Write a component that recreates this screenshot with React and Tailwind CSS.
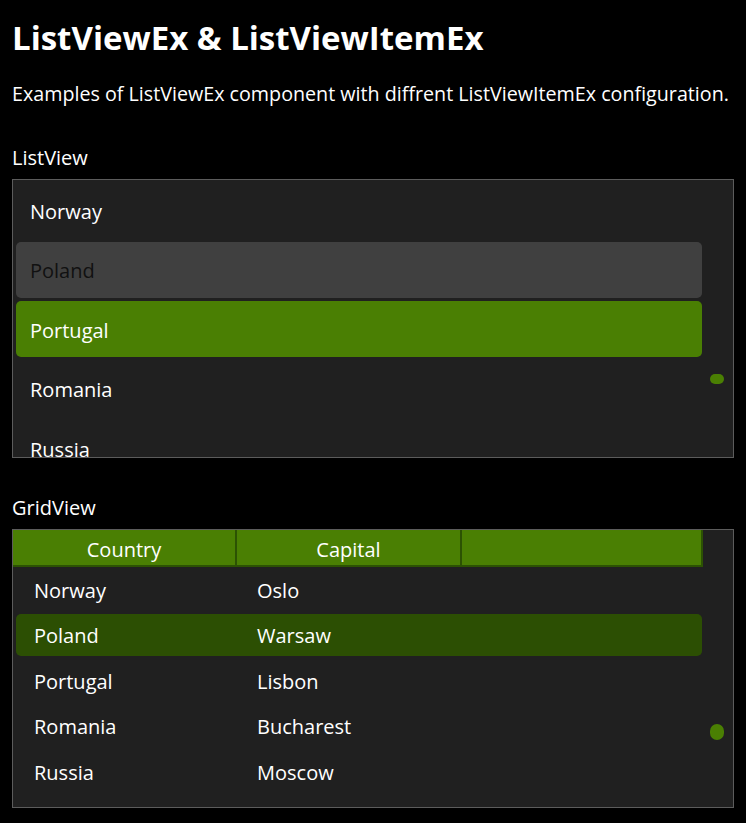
const COUNTRIES = [
  { name: "Norway", capital: "Oslo" },
  { name: "Poland", capital: "Warsaw" },
  { name: "Portugal", capital: "Lisbon" },
  { name: "Romania", capital: "Bucharest" },
  { name: "Russia", capital: "Moscow" },
];

const LIST_STATE = {
  Poland: "bg-[#404040] text-[#111111]",
  Portugal: "bg-[#4a7f03] text-white",
};

function ListViewEx() {
  return (
    <div className="relative h-[279px] border border-[#5c5c5c] bg-[#202020] overflow-hidden">
      <div className="flex flex-col gap-[3.5px] pt-[2.5px] pl-[3px] pr-[31px]">
        {COUNTRIES.map((c) => (
          <div
            key={c.name}
            className={`h-[56px] shrink-0 flex items-center pl-[14px] pt-[3px] rounded-[5px] ${LIST_STATE[c.name] || "text-white"}`}
          >
            {c.name}
          </div>
        ))}
      </div>
      {/* collapsed scroll thumb */}
      <div className="absolute left-[697px] top-[194px] w-[14px] h-[10px] rounded-full bg-[#4a7f03]" />
    </div>
  );
}

function GridViewEx() {
  return (
    <div className="relative h-[279px] border border-[#5c5c5c] bg-[#202020] overflow-hidden">
      <div className="flex h-[37px] w-[690px] bg-[#4a7f03] border-b-2 border-[#2c5203]">
        <div className="w-[224px] flex items-center justify-center pt-[5px] border-r-2 border-[#2c5203]">Country</div>
        <div className="w-[225px] flex items-center justify-center pt-[5px] border-r-2 border-[#2c5203]">Capital</div>
        <div className="flex-1 border-r-2 border-[#2c5203]" />
      </div>
      <div className="flex flex-col gap-[3.5px] pt-[1.5px] pl-[3px] pr-[31px]">
        {COUNTRIES.map((c) => (
          <div
            key={c.name}
            className={`h-[42px] shrink-0 grid grid-cols-[224px_224px_1fr] items-center pt-[3px] rounded-[5px] ${c.name === "Poland" ? "bg-[#2c4f03]" : ""}`}
          >
            <span className="pl-[18px]">{c.name}</span>
            <span className="pl-[17px]">{c.capital}</span>
            <span />
          </div>
        ))}
      </div>
      <div className="absolute left-[697px] top-[194px] w-[14px] h-[16px] rounded-full bg-[#4a7f03]" />
    </div>
  );
}

export default function App() {
  return (
    <div className="min-h-screen bg-black text-white px-[12px] pb-[15px] font-['Open_Sans',sans-serif] text-[20px]">
      <h1 className="pt-[18px] h-[58px] leading-[40px] text-[33px] font-bold m-0 whitespace-nowrap">
        ListViewEx &amp; ListViewItemEx
      </h1>
      <p className="mt-[22px] leading-[28px] m-0 text-[19.7px] whitespace-nowrap">
        Examples of ListViewEx component with diffrent ListViewItemEx configuration.
      </p>
      <div className="mt-[36px] mb-[6.8px] leading-[28px]">ListView</div>
      <ListViewEx />
      <div className="mt-[36.2px] mb-[6.8px] leading-[28px]">GridView</div>
      <GridViewEx />
    </div>
  );
}
